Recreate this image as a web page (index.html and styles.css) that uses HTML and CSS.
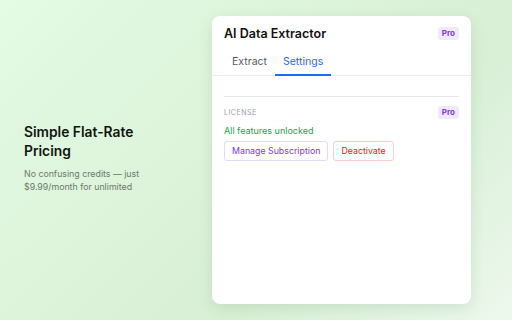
FILE: index.html
```html
<!DOCTYPE html>
<html lang="en">
<head>
    <meta charset="UTF-8">
    <meta name="viewport" content="width=device-width, initial-scale=1.0">
    <title>AI Data Extractor - Pricing</title>
    <link rel="stylesheet" href="styles.css">
</head>
<body>
    <div id="stage">
        <div id="pitch">
            <h1>Simple Flat-Rate Pricing</h1>
            <p>No confusing credits — just $9.99/month for unlimited</p>
        </div>
        <div id="popup">
            <header>
                <h2>AI Data Extractor</h2>
                <span class="badge">Pro</span>
            </header>
            <nav id="tabs">
                <div class="tab">Extract</div>
                <div class="tab active">Settings</div>
            </nav>
            <div id="panel">
                <div class="section">
                    <div class="section-head">
                        <span class="label">License</span>
                        <span class="badge">Pro</span>
                    </div>
                    <p class="status">All features unlocked</p>
                    <div class="actions">
                        <button class="btn btn-manage">Manage Subscription</button>
                        <button class="btn btn-danger">Deactivate</button>
                    </div>
                </div>
            </div>
        </div>
    </div>
</body>
</html>
```

FILE: styles.css
```css
body {
    margin: 0;
    font-family: Inter, "Noto Sans", sans-serif;
    width: 512px;
    height: 320px;
    overflow: hidden;
    background: linear-gradient(135deg, #e4fbe4 0%, #dcf2d9 45%, #d8efd6 65%, #ecf8ec 100%);
}
#stage {
    display: flex;
    align-items: center;
    height: 320px;
    padding: 0 41px 0 24px;
    box-sizing: border-box;
}
#pitch {
    width: 176px;
    margin-right: 12px;
    margin-bottom: 4px;
}
#pitch h1 {
    margin: 0;
    font-size: 13.8px;
    line-height: 19px;
    font-weight: 600;
    color: #101510;
    width: 130px;
}
#pitch p {
    margin: 7px 0 0;
    font-size: 8.8px;
    line-height: 12.5px;
    color: #6b7a6b;
    width: 125px;
}
#popup {
    width: 259px;
    height: 288px;
    background-color: #ffffff;
    border-radius: 8px;
    box-shadow: 0 4px 14px rgba(60, 120, 60, 0.14);
}
header {
    display: flex;
    align-items: center;
    justify-content: space-between;
    padding: 0 12px;
    height: 35px;
}
header h2 {
    margin: 0;
    font-size: 12.5px;
    font-weight: 600;
    color: #111;
}
.badge {
    background-color: #f1e9ff;
    color: #7c3aed;
    font-size: 8px;
    font-weight: 700;
    padding: 2px 4px;
    border-radius: 3px;
    line-height: 9px;
}
#tabs {
    display: flex;
    padding: 0 12px;
    border-bottom: 1px solid #e8ecef;
}
.tab {
    padding: 4px 8px 5px;
    font-size: 10.5px;
    color: #555b63;
    border-bottom: 2px solid transparent;
    margin-bottom: -1px;
    height: 14px;
}
.tab.active {
    color: #1a6cf5;
    border-bottom-color: #1a6cf5;
}
#panel {
    padding: 20px 12px 0;
}
.section {
    border-top: 1px solid #e6e9ec;
    padding-top: 9px;
}
.section-head {
    display: flex;
    align-items: center;
    justify-content: space-between;
}
.label {
    font-size: 7px;
    letter-spacing: 0.5px;
    text-transform: uppercase;
    color: #9aa0a6;
}
.status {
    margin: 6px 0 5px;
    font-size: 9px;
    color: #16a34a;
}
.actions {
    display: flex;
    gap: 5px;
}
.btn {
    font-family: Inter, "Noto Sans", sans-serif;
    font-size: 8.8px;
    padding: 3px 7px;
    background-color: #ffffff;
    border-radius: 3px;
    border: 1px solid #e1d9fb;
    cursor: pointer;
    line-height: 12px;
}
.btn-manage {
    color: #7c3aed;
}
.btn-danger {
    color: #dc2626;
    border-color: #fccaca;
}
```
